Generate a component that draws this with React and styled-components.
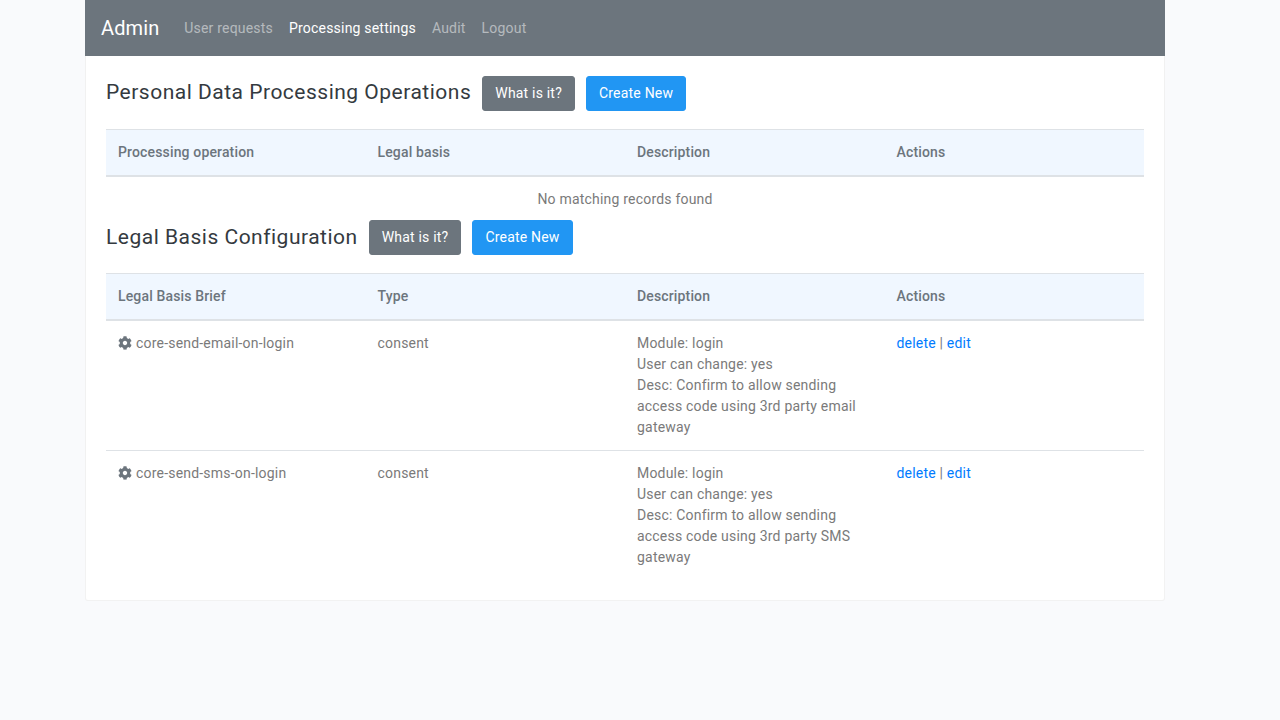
import styled, { createGlobalStyle } from "styled-components";
import { FaCog } from "react-icons/fa";

const GlobalStyle = createGlobalStyle`
  body {
    margin: 0;
    background: #f9fafc;
    font-family: Roboto, "Liberation Sans", sans-serif;
    font-size: 14px;
    line-height: 21px;
    letter-spacing: 0.2px;
    color: #7a7a7a;
  }
`;

const basisRows = [
  {
    brief: "core-send-email-on-login",
    type: "consent",
    desc: "Confirm to allow sending access code using 3rd party email gateway",
  },
  {
    brief: "core-send-sms-on-login",
    type: "consent",
    desc: "Confirm to allow sending access code using 3rd party SMS gateway",
  },
];

export default function App() {
  return (
    <Page>
      <GlobalStyle />
      <Navbar>
        <Brand>Admin</Brand>
        <NavLink>User requests</NavLink>
        <NavLink $active>Processing settings</NavLink>
        <NavLink>Audit</NavLink>
        <NavLink>Logout</NavLink>
      </Navbar>
      <Card>
        <TitleRow>
          <Title>Personal Data Processing Operations</Title>
          <Button $kind="secondary">What is it?</Button>
          <Button>Create New</Button>
        </TitleRow>
        <Table>
          <thead>
            <tr>
              <Th>Processing operation</Th>
              <Th>Legal basis</Th>
              <Th>Description</Th>
              <Th>Actions</Th>
            </tr>
          </thead>
        </Table>
        <NoRecords>No matching records found</NoRecords>
        <TitleRow>
          <Title $low>Legal Basis Configuration</Title>
          <Button $kind="secondary">What is it?</Button>
          <Button>Create New</Button>
        </TitleRow>
        <Table>
          <thead>
            <tr>
              <Th>Legal Basis Brief</Th>
              <Th>Type</Th>
              <Th>Description</Th>
              <Th>Actions</Th>
            </tr>
          </thead>
          <tbody>
            {basisRows.map((row) => (
              <Row key={row.brief}>
                <Td>
                  <GearIcon />
                  {row.brief}
                </Td>
                <Td>{row.type}</Td>
                <Td>
                  Module: login
                  <br />
                  User can change: yes
                  <br />
                  Desc: {row.desc}
                </Td>
                <Td>
                  <ActionLink>delete</ActionLink> | <ActionLink>edit</ActionLink>
                </Td>
              </Row>
            ))}
          </tbody>
        </Table>
      </Card>
    </Page>
  );
}

const Page = styled.div`
  width: 1080px;
  margin-left: 85px;
`;

const Navbar = styled.nav`
  height: 56px;
  padding: 0 16px;
  display: flex;
  align-items: center;
  background: #6c757d;
`;

const Brand = styled.a`
  margin-right: 17px;
  font-size: 20px;
  line-height: 30px;
  letter-spacing: 0.1px;
  color: #fff;
`;

const NavLink = styled.a`
  padding: 0 8px;
  color: ${(p) => (p.$active ? "#fff" : "rgba(255, 255, 255, 0.5)")};
`;

const Card = styled.div`
  padding: 20px;
  background: #fff;
  border: 1px solid rgba(0, 0, 0, 0.05);
  border-top: 0;
  border-radius: 0 0 3px 3px;
`;

const TitleRow = styled.div`
  display: flex;
  align-items: center;
  gap: 11px;
  margin-bottom: 18px;
`;

const Title = styled.h4`
  margin: 0 0 ${(p) => (p.$low ? "2px" : "4px")};
  font-size: 21px;
  font-weight: 400;
  line-height: 30px;
  letter-spacing: 0.5px;
  color: #343a40;
`;

const Button = styled.button`
  height: 35px;
  padding: 0 12px;
  border: 1px solid ${(p) => (p.$kind === "secondary" ? "#6c757d" : "#2196f3")};
  border-radius: 3px;
  background: ${(p) => (p.$kind === "secondary" ? "#6c757d" : "#2196f3")};
  font: inherit;
  letter-spacing: inherit;
  color: #fff;
`;

const Table = styled.table`
  width: 100%;
  table-layout: fixed;
  border-collapse: collapse;
`;

const Th = styled.th`
  padding: 12px;
  border-top: 1px solid #dee2e6;
  border-bottom: 2px solid #dee2e6;
  background: #f0f7ff;
  font-weight: 500;
  letter-spacing: 0.15px;
  text-align: left;
  color: #6c757d;
`;

const Row = styled.tr`
  & + & td {
    border-top: 1px solid #dee2e6;
  }
`;

const Td = styled.td`
  padding: 12px;
  vertical-align: top;
`;

const GearIcon = styled(FaCog)`
  width: 14px;
  height: 14px;
  margin-right: 4px;
  vertical-align: -2px;
  color: #6c757d;
`;

const ActionLink = styled.a`
  color: #007bff;
`;

const NoRecords = styled.div`
  padding-top: 12px;
  margin-bottom: 10px;
  text-align: center;
`;
